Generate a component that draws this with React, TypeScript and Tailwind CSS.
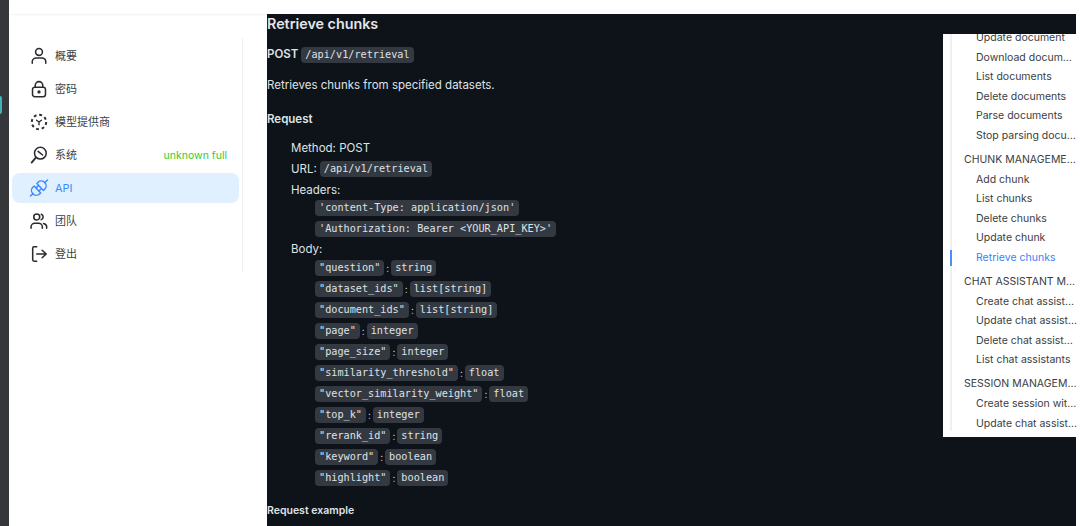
import React from "react";

const S = ({ children }: { children: React.ReactNode }) => (
  <svg width="18" height="18" viewBox="0 0 20 20" fill="none" stroke="currentColor" strokeWidth="1.7" strokeLinecap="round" strokeLinejoin="round" className="shrink-0 overflow-visible">
    {children}
  </svg>
);

const icons: Record<string, React.ReactNode> = {
  user: <S><circle cx="10" cy="5.500" r="3.800" /><path d="M2.500 18v-1.500c0-2.500 2-4.200 4.500-4.200h6c2.500 0 4.500 1.700 4.500 4.200V18" /></S>,
  lock: <S><rect x="2.800" y="8" width="14.400" height="10.500" rx="2.500" /><path d="M5.800 8V6a4.200 4.200 0 0 1 8.400 0v2" /><circle cx="10" cy="13.200" r="1" fill="currentColor" /></S>,
  model: <S><circle cx="10" cy="10" r="8" strokeWidth="2.200" strokeDasharray="3.200 3.080" strokeLinecap="butt" /><path d="M7.300 8l2.700 2 2.700-2M10 10v3" strokeWidth="1.500" /></S>,
  system: <S><circle cx="11.500" cy="8" r="6.500" /><path d="M6.500 13 1.800 18.500" strokeWidth="2" /><path d="M9 6l5 4" /></S>,
  api: (
    <S>
      <g transform="rotate(-43 10 10) translate(10 10) scale(1.180) translate(-10 -10)" strokeWidth="1.350">
        <path d="M-1 10h3.500" />
        <path d="M8 5.500v9H6.500a4.500 4.500 0 0 1 0-9z" />
        <path d="M8 8h2.800M8 12h2.800" />
        <path d="M11.500 5.500v9h1.500a4.500 4.500 0 0 0 0-9z" />
        <path d="M17.500 10H21" />
      </g>
    </S>
  ),
  team: <S><circle cx="7.500" cy="5.500" r="3.300" /><path d="M1.200 18v-1.500c0-2.500 2-4 4-4h4.500c2 0 4 1.500 4 4V18" /><path d="M12.500 2.500a3.200 3.200 0 0 1 0 6M15 12.800c2 .4 3.500 1.800 3.500 3.700V18" /></S>,
  logout: <S><path d="M7.500 2H4.500C3.500 2 3 2.600 3 3.500v13c0 .9.500 1.500 1.500 1.500h3" /><path d="M7.500 10h10.500M13.500 5.800 18 10l-4.500 4.200" /></S>,
};

const nav: [string, string][] = [
  ["user", "概要"],
  ["lock", "密码"],
  ["model", "模型提供商"],
  ["system", "系统"],
  ["api", "API"],
  ["team", "团队"],
  ["logout", "登出"],
];

const C = ({ children }: { children: React.ReactNode }) => (
  <code className="inline-block h-[16px] rounded-[4px] bg-[#343941] px-[4px] text-[10.2px] font-normal leading-[16px] text-[#dfe2e5] [font-family:'DejaVu_Sans_Mono',monospace]">
    {children}
  </code>
);

const body: [string, string][] = [
  ['"question"', "string"],
  ['"dataset_ids"', "list[string]"],
  ['"document_ids"', "list[string]"],
  ['"page"', "integer"],
  ['"page_size"', "integer"],
  ['"similarity_threshold"', "float"],
  ['"vector_similarity_weight"', "float"],
  ['"top_k"', "integer"],
  ['"rerank_id"', "string"],
  ['"keyword"', "boolean"],
  ['"highlight"', "boolean"],
];

type T = { t: string; h?: boolean; a?: boolean };
const toc: T[] = [
  { t: "Update document" },
  { t: "Download document" },
  { t: "List documents" },
  { t: "Delete documents" },
  { t: "Parse documents" },
  { t: "Stop parsing documents" },
  { t: "CHUNK MANAGEMENT", h: true },
  { t: "Add chunk" },
  { t: "List chunks" },
  { t: "Delete chunks" },
  { t: "Update chunk" },
  { t: "Retrieve chunks", a: true },
  { t: "CHAT ASSISTANT MANAGEMENT", h: true },
  { t: "Create chat assistant" },
  { t: "Update chat assistant" },
  { t: "Delete chat assistant" },
  { t: "List chat assistants" },
  { t: "SESSION MANAGEMENT", h: true },
  { t: "Create session with chat" },
  { t: "Update chat assistant" },
];

export default function App() {
  return (
    <div className="flex h-[526px] w-[1080px] overflow-hidden bg-white [font-family:Inter,'Noto_Sans_CJK_SC',sans-serif]">
      <div className="relative w-[9px] shrink-0 bg-[#36373b]">
        <div className="absolute left-0 top-[96px] h-[18px] w-[2px] rounded-r-sm bg-[#3fb4b8]" />
      </div>
      <div className="flex min-w-0 flex-1 flex-col">
        <div className="h-[14px] shrink-0 bg-white shadow-[0_1px_2px_rgba(0,0,0,0.06)]" />
        <div className="flex min-h-0 flex-1">
          <aside className="w-[258px] shrink-0 pl-[3px] pt-[24px]">
            <div className="h-[234px] w-[231px] border-r border-[#f0f0f0] pr-[3px]">
              <nav className="flex flex-col gap-[3px] pt-[3px]">
                {nav.map(([k, label]) => {
                  const active = k === "api";
                  return (
                    <div
                      key={k}
                      className={`flex h-[30px] items-center rounded-[8px] pl-[18px] pr-[12px] ${active ? "bg-[#e1f0ff] text-[#3a8bff]" : "text-[#2a2c30]"}`}
                    >
                      {icons[k]}
                      <span className={`ml-[7px] text-[11px] ${active ? "text-[#3a8bff]" : "text-[#3c3f44]"}`}>{label}</span>
                      {k === "system" && <span className="ml-auto pt-[1px] text-[10.5px] text-[#33cc33]">unknown full</span>}
                    </div>
                  );
                })}
              </nav>
            </div>
          </aside>
          <main className="relative w-[809px] shrink-0 bg-[#0d1319] text-[#dfe3e7]">
            <h2 className="mt-[1px] text-[14.3px] font-semibold leading-[18px] text-[#e3e6e9]">Retrieve chunks</h2>
            <p className="mt-[14px] flex h-[16px] items-center gap-[3px] text-[11.5px] font-semibold">
              POST <C>/api/v1/retrieval</C>
            </p>
            <p className="mt-[14px] text-[11.5px] leading-[16px]">Retrieves chunks from specified datasets.</p>
            <p className="mt-[18px] text-[11.5px] font-semibold leading-[16px]">Request</p>
            <div className="mt-[13px] pl-[24px] text-[11.5px]">
              <div className="h-[21px] leading-[16px]">Method: POST</div>
              <div className="flex h-[21px] items-start gap-[3px] leading-[16px]">URL: <C>/api/v1/retrieval</C></div>
              <div className="h-[18px] leading-[16px]">Headers:</div>
              <div className="flex flex-col items-start gap-[5px] pl-[24px]">
                <C>'content-Type: application/json'</C>
                <C>'Authorization: Bearer &lt;YOUR_API_KEY&gt;'</C>
              </div>
              <div className="mt-[4px] h-[19px] leading-[16px]">Body:</div>
              <div className="flex flex-col items-start gap-[5px] pl-[24px]">
                {body.map(([k, v]) => (
                  <div key={k} className="flex h-[16px] items-center gap-[2px] text-[10px]">
                    <C>{k}</C><span className="text-[#c8ccd0]">:</span><C>{v}</C>
                  </div>
                ))}
              </div>
            </div>
            <p className="mt-[17px] text-[10.5px] font-semibold leading-[16px]">Request example</p>
            <div className="absolute left-[676px] top-[20px] h-[403px] w-[134.500px] overflow-hidden bg-white pl-[7px]">
              <div className="h-full border-l-2 border-[#f0f0f0]">
                <div className="-mt-[5.700px] text-[10.500px] text-[#3a3d42]">
                  {toc.map((x, i) => (
                    <div
                      key={i}
                      className={`relative flex h-[19.500px] items-center whitespace-nowrap ${x.h ? "mb-[0.500px] mt-[4.500px] pl-[12px]" : "pl-[24px]"} ${x.a ? "text-[#3b82f6]" : ""}`}
                    >
                      {x.a && <span className="absolute -left-[2px] top-[2px] h-[16px] w-[2px] bg-[#4a90f5]" />}
                      <span className="block w-full overflow-hidden text-ellipsis">{x.t}</span>
                    </div>
                  ))}
                </div>
              </div>
            </div>
          </main>
          <div className="flex-1 bg-white" />
        </div>
      </div>
    </div>
  );
}
